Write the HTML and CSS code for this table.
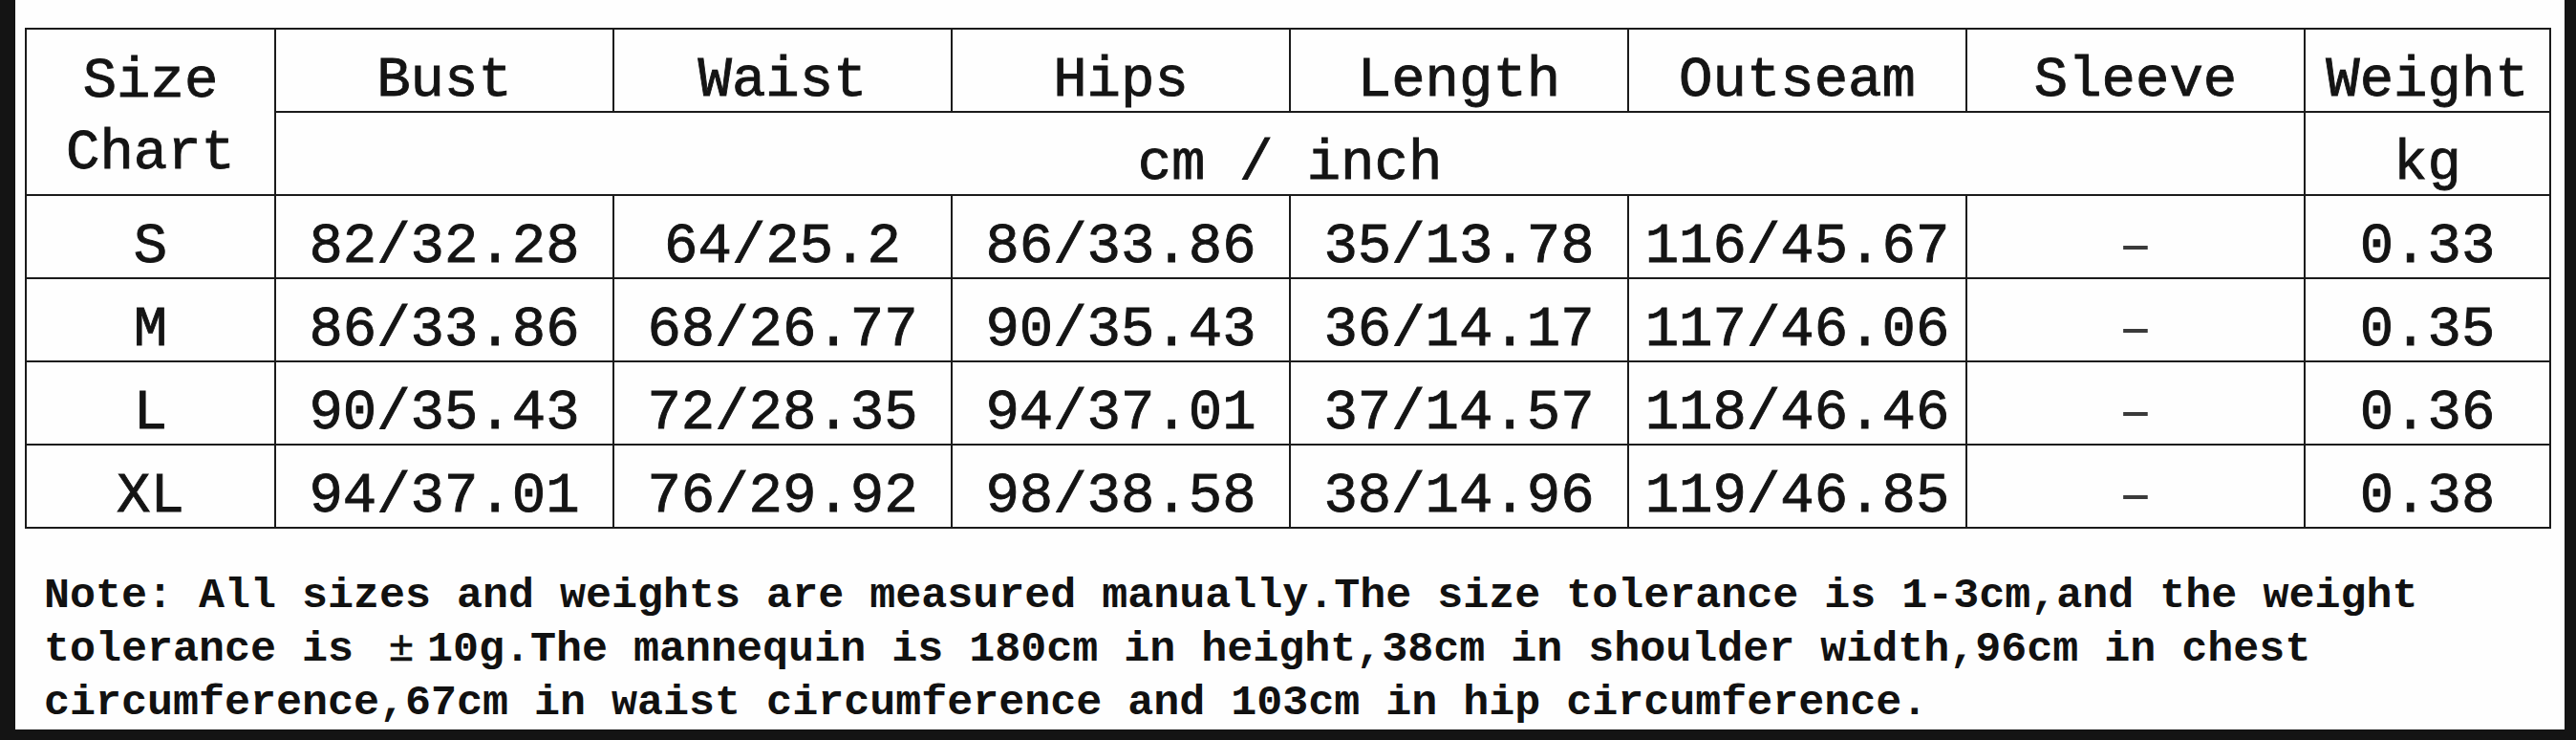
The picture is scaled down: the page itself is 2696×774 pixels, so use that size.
FILE: index.html
```html
<!DOCTYPE html>
<html lang="en">
<head>
<meta charset="utf-8">
<title>Size Chart</title>
<link rel="stylesheet" href="styles.css">
</head>
<body>
<div class="sheet">
  <table class="chart">
    <colgroup>
      <col class="col-size">
      <col class="col-data">
      <col class="col-data">
      <col class="col-data">
      <col class="col-data">
      <col class="col-data">
      <col class="col-data">
      <col class="col-weight">
    </colgroup>
    <thead>
      <tr>
        <th class="size-head" rowspan="2">Size<br>Chart</th>
        <th>Bust</th>
        <th>Waist</th>
        <th>Hips</th>
        <th>Length</th>
        <th>Outseam</th>
        <th>Sleeve</th>
        <th>Weight</th>
      </tr>
      <tr>
        <th colspan="6">cm / inch</th>
        <th>kg</th>
      </tr>
    </thead>
    <tbody>
      <tr>
        <td>S</td><td>82/32.28</td><td>64/25.2</td><td>86/33.86</td><td>35/13.78</td><td>116/45.67</td><td class="dash">–</td><td>0.33</td>
      </tr>
      <tr>
        <td>M</td><td>86/33.86</td><td>68/26.77</td><td>90/35.43</td><td>36/14.17</td><td>117/46.06</td><td class="dash">–</td><td>0.35</td>
      </tr>
      <tr>
        <td>L</td><td>90/35.43</td><td>72/28.35</td><td>94/37.01</td><td>37/14.57</td><td>118/46.46</td><td class="dash">–</td><td>0.36</td>
      </tr>
      <tr>
        <td>XL</td><td>94/37.01</td><td>76/29.92</td><td>98/38.58</td><td>38/14.96</td><td>119/46.85</td><td class="dash">–</td><td>0.38</td>
      </tr>
    </tbody>
  </table>
  <p class="note">Note: All sizes and weights are measured manually.The size tolerance is 1-3cm,and the weight<br>tolerance is <span class="pm">±</span>10g.The mannequin is 180cm in height,38cm in shoulder width,96cm in chest<br>circumference,67cm in waist circumference and 103cm in hip circumference.</p>
</div>
</body>
</html>
```

FILE: styles.css
```css
html, body {
  margin: 0;
  padding: 0;
}

body {
  background: #141414;
  padding: 0 12px 11px 16px;
  width: 2668px;
}

.sheet {
  background: #fefefe;
  height: 763px;
  box-sizing: border-box;
  padding: 29px 0 0 10px;
  font-family: "Liberation Mono", "Noto Sans CJK SC", monospace;
  color: #141414;
}

.chart {
  border-collapse: collapse;
  table-layout: fixed;
  width: 2644px;
}

.col-size { width: 261px; }
.col-data { width: 354px; }
.col-weight { width: 257px; }

.chart tr {
  height: 87px;
}

.chart th,
.chart td {
  border: 2px solid #1b1b1b;
  padding: 22px 0 0;
  font-size: 59px;
  font-weight: normal;
  line-height: 1;
  text-align: center;
  vertical-align: middle;
  white-space: nowrap;
  -webkit-text-stroke: 0.9px #141414;
}

.chart th.size-head {
  line-height: 75px;
  padding-top: 12px;
}

.chart td.dash {
  color: #3a3a3a;
  -webkit-text-stroke: 0;
}

.note {
  margin: 43px 0 0 20px;
  font-size: 45px;
  font-weight: bold;
  line-height: 56px;
  white-space: nowrap;
  color: #111;
}

.pm {
  display: inline-block;
  width: 2ch;
  margin-left: -4px;
  text-align: center;
  font-weight: normal;
  -webkit-text-stroke: 0.6px #111;
}
```
